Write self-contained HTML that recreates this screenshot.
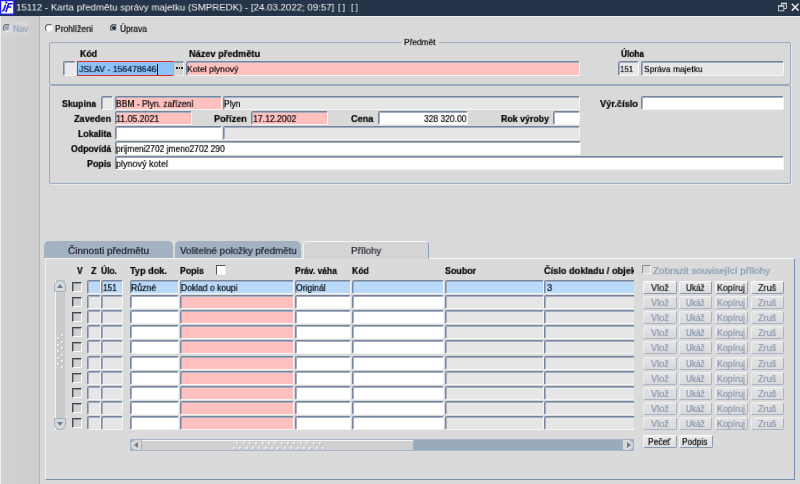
<!DOCTYPE html><html><head><meta charset="utf-8"><style>
*{margin:0;padding:0;box-sizing:border-box}
html,body{width:800px;height:484px;overflow:hidden;background:#d9d9d9;font-family:"Liberation Sans",sans-serif;font-size:10px;color:#000;position:relative}
.t{position:absolute;white-space:nowrap;line-height:12px;transform-origin:0 0;will-change:transform;-webkit-text-stroke:0.2px currentColor}
.f{position:absolute;border-top:1px solid #76849d;border-left:1px solid #7a88a0;border-right:1px solid #f5f5f5;border-bottom:1px solid #f5f5f5;box-shadow:inset 1px 1px 0 #a3aec0;border-radius:2px}
.btn{position:absolute;height:13px;border:1px solid #8a9ab0;border-top-color:#fbfbfb;border-left-color:#f6f6f6;background:linear-gradient(#ebebeb,#dcdcdc);border-radius:2px}
.dis{background:linear-gradient(#e4e4e4,#dadada);border-color:#f0f0f0 #a9b5c6 #a9b5c6 #ededed}
.cb{position:absolute;width:10px;height:10px;border-top:1px solid #3f4753;border-left:1px solid #444c58;border-right:1px solid #fafafa;border-bottom:1px solid #fafafa;background:#d0d0d0;box-shadow:inset 1px 1px 0 #8e96a0}
</style></head><body>
<div style="position:absolute;left:0px;top:0px;width:800px;height:16px;background:#26344a"></div>
<svg style="position:absolute;left:0;top:0" width="15" height="15" viewBox="0 0 15 15"><rect x="0.6" y="0.6" width="13.3" height="13.6" fill="#fbfbf0" stroke="#1a1af2" stroke-width="1.3"/><circle cx="6.3" cy="2.6" r="1.1" fill="#1010e8"/><path d="M5.4 5.2 L3.6 10.4 L2.6 10.9" fill="none" stroke="#1010e8" stroke-width="1.6" stroke-linecap="round"/><path d="M8.6 3.8 L12.2 3.8 M7.4 7 L10.6 7 M8.6 3.8 L6 11.4" fill="none" stroke="#1010e8" stroke-width="1.6" stroke-linecap="round"/></svg>
<div class="t" style="left:16.03px;top:2.73px;font-size:10px;color:#f4f4f4;transform:scale(0.9679,0.83);-webkit-text-stroke:0">15112 - Karta předmětu správy majetku (SMPREDK) - [24.03.2022; 09:57]</div>
<div class="t" style="left:338.00px;top:2.73px;font-size:10px;color:#f4f4f4;transform:scale(0.8375,0.83);-webkit-text-stroke:0">[ ]</div>
<div class="t" style="left:351.30px;top:2.73px;font-size:10px;color:#f4f4f4;transform:scale(0.8125,0.83);-webkit-text-stroke:0">[ ]</div>
<svg style="position:absolute;left:770px;top:0px" width="30" height="16" viewBox="0 0 30 16"><path d="M11.5 8.5 V3.5 H16.5 V8.5 H14" fill="none" stroke="#c4c6ca" stroke-width="1"/><path d="M11 3.5 H17" stroke="#d0d2d6" stroke-width="1.6"/><rect x="8.5" y="5.8" width="5.3" height="5" fill="#26354a" stroke="#c4c6ca" stroke-width="1"/><path d="M8 6.2 H14.3" stroke="#c8cacd" stroke-width="1.2"/><path d="M21.8 3.8 L28.6 10.6 M28.6 3.8 L21.8 10.6" stroke="#e6e6e6" stroke-width="1.5"/></svg>
<div style="position:absolute;left:0px;top:16px;width:800px;height:1px;background:#f0f0f0"></div>
<div style="position:absolute;left:0px;top:16px;width:39px;height:468px;background:linear-gradient(90deg,#d2d2d2,#cdcdcd);border-left:1px solid #efefef"></div>
<div style="position:absolute;left:39px;top:16px;width:1px;height:468px;background:#a9b8cb"></div>
<div style="position:absolute;left:2px;top:21px;width:27px;height:14px;background:#d6d6d6"></div>
<div style="position:absolute;left:3px;top:24px;width:8px;height:8px;border-radius:50%;background:#8fa0b6;border:1px solid #666;border-right-color:#eee;border-bottom-color:#eee;box-shadow:inset 0 0 0 1px #c8d0da"></div>
<div class="t" style="left:13.12px;top:24.30px;font-size:10px;color:#93a4bc;transform:scale(0.8824,0.9);">Nav</div>
<div style="position:absolute;left:45px;top:24px;width:8px;height:8px;border-radius:50%;background:#fff;border:1px solid #555;border-right-color:#e8e8e8;border-bottom-color:#e8e8e8"></div>
<div class="t" style="left:55.35px;top:23.70px;font-size:10px;color:#000;transform:scale(0.8512,0.9);">Prohlíženi</div>
<div style="position:absolute;left:110px;top:24px;width:8px;height:8px;border-radius:50%;background:#263040;border:1px solid #555;border-right-color:#e8e8e8;border-bottom-color:#e8e8e8;box-shadow:inset 0 0 0 1px #b8bec8"></div>
<div class="t" style="left:120.20px;top:23.70px;font-size:10px;color:#000;transform:scale(0.8303,0.9);">Úprava</div>
<div style="position:absolute;left:49px;top:42px;width:742px;height:43px;border:1px solid #9dacc0;border-radius:2px;box-shadow:1px 1px 0 #e8e8e8"></div>
<div style="position:absolute;left:401px;top:40px;width:38px;height:5px;background:#d9d9d9"></div>
<div class="t" style="left:404.17px;top:38.40px;font-size:10px;color:#000;transform:scale(0.8324,0.8);">Předmět</div>
<div class="t" style="left:80.40px;top:48.90px;font-size:10px;font-weight:bold;color:#000;transform:scale(0.8789,0.9);">Kód</div>
<div class="t" style="left:188.75px;top:48.90px;font-size:10px;font-weight:bold;color:#000;transform:scale(0.9201,0.9);">Název předmětu</div>
<div class="t" style="left:621.25px;top:48.90px;font-size:10px;font-weight:bold;color:#000;transform:scale(0.8268,0.9);">Úloha</div>
<div class="f" style="left:63px;top:61px;width:13px;height:15px;background:#e9e9e9;"></div>
<div style="position:absolute;left:77px;top:61px;width:96px;height:15px;background:#8cc3f8;border:1px solid #e42a2a;border-right:none"></div>
<div style="position:absolute;left:157px;top:64px;width:1px;height:11px;background:#000"></div>
<div class="t" style="left:79.20px;top:65.20px;font-size:10px;color:#08102a;transform:scale(0.8708,0.8);">JSLAV - 156478646</div>
<div style="position:absolute;left:173px;top:61px;width:11px;height:15px;background:#d4d4d4;border-top:2px solid #8a9bb2;border-left:1px solid #aab;border-right:1px solid #f2f2f2;border-bottom:1px solid #f2f2f2"></div>
<div style="position:absolute;left:176px;top:67px;width:1.5px;height:2px;background:#222"></div><div style="position:absolute;left:178.5px;top:67px;width:1.5px;height:2px;background:#222"></div><div style="position:absolute;left:181px;top:67px;width:1.5px;height:2px;background:#222"></div>
<div class="f" style="left:186px;top:61px;width:394px;height:15px;background:#ffc0c0;"></div>
<div class="t" style="left:186.89px;top:65.20px;font-size:10px;color:#000;transform:scale(0.8644,0.8);">Kotel plynový</div>
<div class="f" style="left:618px;top:61px;width:21px;height:15px;background:#e9e9e9;"></div>
<div class="t" style="left:620.46px;top:65.20px;font-size:10px;color:#000;transform:scale(0.7900,0.8);">151</div>
<div class="f" style="left:641px;top:61px;width:143px;height:15px;background:#e6e6e6;"></div>
<div class="t" style="left:643.75px;top:65.20px;font-size:10px;color:#000;transform:scale(0.8428,0.8);">Správa majetku</div>
<div style="position:absolute;left:49px;top:85px;width:742px;height:99px;border:1px solid #9dacc0;border-radius:2px;box-shadow:1px 1px 0 #e8e8e8"></div>
<div class="t" style="left:62.00px;top:98.90px;font-size:10px;font-weight:bold;color:#000;transform:scale(0.8782,0.9);">Skupina</div>
<div class="f" style="left:101px;top:96px;width:12px;height:14px;background:#e9e9e9;"></div>
<div class="f" style="left:115px;top:96px;width:107px;height:14px;background:#ffc0c0;"></div>
<div class="t" style="left:116.15px;top:98.90px;font-size:10px;color:#000;transform:scale(0.8511,0.9);">BBM - Plyn. zařízení</div>
<div class="f" style="left:223px;top:96px;width:357px;height:14px;background:#e6e6e6;"></div>
<div class="t" style="left:224.17px;top:98.90px;font-size:10px;color:#000;transform:scale(0.8333,0.9);">Plyn</div>
<div class="t" style="left:599.60px;top:98.90px;font-size:10px;font-weight:bold;color:#000;transform:scale(0.9220,0.9);">Výr.číslo</div>
<div class="f" style="left:641px;top:96px;width:143px;height:14px;background:#fff;"></div>
<div class="t" style="left:74.00px;top:113.90px;font-size:10px;font-weight:bold;color:#000;transform:scale(0.9125,0.9);">Zaveden</div>
<div class="f" style="left:115px;top:111px;width:77px;height:14px;background:#ffc0c0;"></div>
<div class="t" style="left:116.12px;top:113.90px;font-size:10px;color:#000;transform:scale(0.8750,0.9);">11.05.2021</div>
<div class="t" style="left:214.40px;top:113.90px;font-size:10px;font-weight:bold;color:#000;transform:scale(0.9056,0.9);">Pořízen</div>
<div class="f" style="left:251px;top:111px;width:77px;height:14px;background:#ffc0c0;"></div>
<div class="t" style="left:252.73px;top:113.90px;font-size:10px;color:#000;transform:scale(0.8653,0.9);">17.12.2002</div>
<div class="t" style="left:351.10px;top:113.90px;font-size:10px;font-weight:bold;color:#000;transform:scale(0.9100,0.9);">Cena</div>
<div class="f" style="left:378px;top:111px;width:90px;height:14px;background:#fff;"></div>
<div class="t" style="left:423.60px;top:113.90px;font-size:10px;color:#000;transform:scale(0.8480,0.9);">328 320.00</div>
<div class="t" style="left:501.00px;top:113.90px;font-size:10px;font-weight:bold;color:#000;transform:scale(0.8800,0.9);">Rok výroby</div>
<div class="f" style="left:553px;top:111px;width:27px;height:14px;background:#fff;"></div>
<div class="t" style="left:77.50px;top:128.90px;font-size:10px;font-weight:bold;color:#000;transform:scale(0.8789,0.9);">Lokalita</div>
<div class="f" style="left:115px;top:126px;width:107px;height:14px;background:#fff;"></div>
<div class="f" style="left:223px;top:126px;width:357px;height:14px;background:#e6e6e6;"></div>
<div class="t" style="left:70.80px;top:143.90px;font-size:10px;font-weight:bold;color:#000;transform:scale(0.8717,0.9);">Odpovídá</div>
<div class="f" style="left:115px;top:141px;width:466px;height:14px;background:#fff;"></div>
<div class="t" style="left:116.30px;top:143.90px;font-size:10px;color:#000;transform:scale(0.8426,0.9);">prijmeni2702 jmeno2702 290</div>
<div class="t" style="left:87.00px;top:158.90px;font-size:10px;font-weight:bold;color:#000;transform:scale(0.8852,0.9);">Popis</div>
<div class="f" style="left:115px;top:156px;width:669px;height:14px;background:#fff;"></div>
<div class="t" style="left:116.30px;top:158.90px;font-size:10px;color:#000;transform:scale(0.9000,0.9);">plynový kotel</div>
<div style="position:absolute;left:44px;top:241px;width:129px;height:17px;background:#a3b1c3;border-radius:5px 5px 0 0"></div>
<div class="t" style="left:68.20px;top:245.90px;font-size:10px;color:#1c1c2a;transform:scale(1.0000,0.9);">Činnosti předmětu</div>
<div style="position:absolute;left:175px;top:241px;width:126px;height:17px;background:#a3b1c3;border-radius:5px 5px 0 0"></div>
<div class="t" style="left:180.20px;top:245.90px;font-size:10px;color:#1c1c2a;transform:scale(0.9765,0.9);">Volitelné položky předmětu</div>
<div style="position:absolute;left:45px;top:258px;width:750px;height:222px;border-top:1px solid #f6f6f6;border-left:1px solid #f0f0f0;border-right:1px solid #7a8fab;border-bottom:1px solid #7a8fab;background:#dadada"></div>
<div style="position:absolute;left:303px;top:241px;width:126px;height:18px;background:#d4d4d4;border-radius:4px 4px 0 0;border-top:1px solid #f6f6f6;border-left:1px solid #f2f2f2;border-right:1px solid #8fa2bb"></div>
<div class="t" style="left:350.72px;top:245.90px;font-size:10px;color:#1c1c2a;transform:scale(0.9767,0.9);">Přílohy</div>
<div class="t" style="left:77.00px;top:266.40px;font-size:10px;font-weight:bold;color:#000;transform:scale(0.8571,0.9);">V</div>
<div class="t" style="left:90.60px;top:266.40px;font-size:10px;font-weight:bold;color:#000;transform:scale(0.9000,0.9);">Z</div>
<div class="t" style="left:101.00px;top:266.40px;font-size:10px;font-weight:bold;color:#000;transform:scale(0.8421,0.9);">Úlo.</div>
<div class="t" style="left:130.40px;top:266.40px;font-size:10px;font-weight:bold;color:#000;transform:scale(0.9150,0.9);">Typ dok.</div>
<div class="t" style="left:180.00px;top:266.40px;font-size:10px;font-weight:bold;color:#000;transform:scale(0.8741,0.9);">Popis</div>
<div class="t" style="left:295.00px;top:266.40px;font-size:10px;font-weight:bold;color:#000;transform:scale(0.8500,0.9);">Práv. váha</div>
<div class="t" style="left:351.75px;top:266.40px;font-size:10px;font-weight:bold;color:#000;transform:scale(0.8684,0.9);">Kód</div>
<div class="t" style="left:445.10px;top:266.40px;font-size:10px;font-weight:bold;color:#000;transform:scale(0.8886,0.9);">Soubor</div>
<div style="position:absolute;left:544px;top:262px;width:90px;height:16px;overflow:hidden">
<div class="t" style="left:0.10px;top:4.40px;font-size:10px;font-weight:bold;color:#000;transform:scale(0.9190,0.9);">Číslo dokladu / objek</div>
</div>
<div style="position:absolute;left:216px;top:265px;width:10px;height:10px;background:#fff;border-top:1px solid #555;border-left:1px solid #555;border-right:1px solid #eee;border-bottom:1px solid #eee"></div>
<div style="position:absolute;left:642px;top:265px;width:9px;height:9px;background:#d8d8d8;border-top:1px solid #8a8a8a;border-left:1px solid #8a8a8a;border-right:1px solid #f4f4f4;border-bottom:1px solid #f4f4f4"></div>
<div class="t" style="left:653.00px;top:266.40px;font-size:10px;color:#8797b3;transform:scale(0.9882,0.9);">Zobrazit související přílohy</div>
<div class="cb" style="left:72px;top:282px"></div>
<div class="f" style="left:87px;top:280px;width:14px;height:14px;background:#b9dafa;"></div>
<div class="f" style="left:101px;top:280px;width:22px;height:14px;background:#b9dafa;"></div>
<div class="f" style="left:130px;top:280px;width:49px;height:14px;background:#b9dafa;"></div>
<div class="f" style="left:180px;top:280px;width:114px;height:14px;background:#b9dafa;"></div>
<div class="f" style="left:295px;top:280px;width:56px;height:14px;background:#b9dafa;"></div>
<div class="f" style="left:352px;top:280px;width:92px;height:14px;background:#b9dafa;"></div>
<div class="f" style="left:445px;top:280px;width:99px;height:14px;background:#b9dafa;"></div>
<div class="f" style="left:544px;top:280px;width:90px;height:14px;background:#b9dafa;border-right:none;border-radius:2px 0 0 2px"></div>
<div class="btn" style="left:643px;top:281px;width:34px"></div>
<div class="btn" style="left:679px;top:281px;width:33px"></div>
<div class="btn" style="left:715px;top:281px;width:33px"></div>
<div class="btn" style="left:751px;top:281px;width:33px"></div>
<div class="t" style="left:650.60px;top:282.50px;font-size:10px;color:#101010;transform:scale(0.9158,0.9);">Vlož</div>
<div class="t" style="left:685.60px;top:282.50px;font-size:10px;color:#101010;transform:scale(0.8174,0.9);">Ukáž</div>
<div class="t" style="left:717.12px;top:282.50px;font-size:10px;color:#101010;transform:scale(0.8800,0.9);">Kopíruj</div>
<div class="t" style="left:757.80px;top:282.50px;font-size:10px;color:#101010;transform:scale(0.9100,0.9);">Zruš</div>
<div class="cb" style="left:72px;top:297px"></div>
<div class="f" style="left:87px;top:295px;width:14px;height:14px;background:#e6e6e6;"></div>
<div class="f" style="left:101px;top:295px;width:22px;height:14px;background:#e6e6e6;"></div>
<div class="f" style="left:130px;top:295px;width:49px;height:14px;background:#fff;"></div>
<div class="f" style="left:180px;top:295px;width:114px;height:14px;background:#ffc0c0;"></div>
<div class="f" style="left:295px;top:295px;width:56px;height:14px;background:#fff;"></div>
<div class="f" style="left:352px;top:295px;width:92px;height:14px;background:#fff;"></div>
<div class="f" style="left:445px;top:295px;width:99px;height:14px;background:#e6e6e6;"></div>
<div class="f" style="left:544px;top:295px;width:90px;height:14px;background:#e6e6e6;border-right:none;border-radius:2px 0 0 2px"></div>
<div class="btn dis" style="left:643px;top:296px;width:34px"></div>
<div class="btn dis" style="left:679px;top:296px;width:33px"></div>
<div class="btn dis" style="left:715px;top:296px;width:33px"></div>
<div class="btn dis" style="left:751px;top:296px;width:33px"></div>
<div class="t" style="left:650.60px;top:297.50px;font-size:10px;color:#8595b0;transform:scale(0.9158,0.9);">Vlož</div>
<div class="t" style="left:685.60px;top:297.50px;font-size:10px;color:#8595b0;transform:scale(0.8174,0.9);">Ukáž</div>
<div class="t" style="left:717.12px;top:297.50px;font-size:10px;color:#8595b0;transform:scale(0.8800,0.9);">Kopíruj</div>
<div class="t" style="left:757.80px;top:297.50px;font-size:10px;color:#8595b0;transform:scale(0.9100,0.9);">Zruš</div>
<div class="cb" style="left:72px;top:312px"></div>
<div class="f" style="left:87px;top:310px;width:14px;height:14px;background:#e6e6e6;"></div>
<div class="f" style="left:101px;top:310px;width:22px;height:14px;background:#e6e6e6;"></div>
<div class="f" style="left:130px;top:310px;width:49px;height:14px;background:#fff;"></div>
<div class="f" style="left:180px;top:310px;width:114px;height:14px;background:#ffc0c0;"></div>
<div class="f" style="left:295px;top:310px;width:56px;height:14px;background:#fff;"></div>
<div class="f" style="left:352px;top:310px;width:92px;height:14px;background:#fff;"></div>
<div class="f" style="left:445px;top:310px;width:99px;height:14px;background:#e6e6e6;"></div>
<div class="f" style="left:544px;top:310px;width:90px;height:14px;background:#e6e6e6;border-right:none;border-radius:2px 0 0 2px"></div>
<div class="btn dis" style="left:643px;top:311px;width:34px"></div>
<div class="btn dis" style="left:679px;top:311px;width:33px"></div>
<div class="btn dis" style="left:715px;top:311px;width:33px"></div>
<div class="btn dis" style="left:751px;top:311px;width:33px"></div>
<div class="t" style="left:650.60px;top:312.50px;font-size:10px;color:#8595b0;transform:scale(0.9158,0.9);">Vlož</div>
<div class="t" style="left:685.60px;top:312.50px;font-size:10px;color:#8595b0;transform:scale(0.8174,0.9);">Ukáž</div>
<div class="t" style="left:717.12px;top:312.50px;font-size:10px;color:#8595b0;transform:scale(0.8800,0.9);">Kopíruj</div>
<div class="t" style="left:757.80px;top:312.50px;font-size:10px;color:#8595b0;transform:scale(0.9100,0.9);">Zruš</div>
<div class="cb" style="left:72px;top:327px"></div>
<div class="f" style="left:87px;top:325px;width:14px;height:14px;background:#e6e6e6;"></div>
<div class="f" style="left:101px;top:325px;width:22px;height:14px;background:#e6e6e6;"></div>
<div class="f" style="left:130px;top:325px;width:49px;height:14px;background:#fff;"></div>
<div class="f" style="left:180px;top:325px;width:114px;height:14px;background:#ffc0c0;"></div>
<div class="f" style="left:295px;top:325px;width:56px;height:14px;background:#fff;"></div>
<div class="f" style="left:352px;top:325px;width:92px;height:14px;background:#fff;"></div>
<div class="f" style="left:445px;top:325px;width:99px;height:14px;background:#e6e6e6;"></div>
<div class="f" style="left:544px;top:325px;width:90px;height:14px;background:#e6e6e6;border-right:none;border-radius:2px 0 0 2px"></div>
<div class="btn dis" style="left:643px;top:326px;width:34px"></div>
<div class="btn dis" style="left:679px;top:326px;width:33px"></div>
<div class="btn dis" style="left:715px;top:326px;width:33px"></div>
<div class="btn dis" style="left:751px;top:326px;width:33px"></div>
<div class="t" style="left:650.60px;top:327.50px;font-size:10px;color:#8595b0;transform:scale(0.9158,0.9);">Vlož</div>
<div class="t" style="left:685.60px;top:327.50px;font-size:10px;color:#8595b0;transform:scale(0.8174,0.9);">Ukáž</div>
<div class="t" style="left:717.12px;top:327.50px;font-size:10px;color:#8595b0;transform:scale(0.8800,0.9);">Kopíruj</div>
<div class="t" style="left:757.80px;top:327.50px;font-size:10px;color:#8595b0;transform:scale(0.9100,0.9);">Zruš</div>
<div class="cb" style="left:72px;top:342px"></div>
<div class="f" style="left:87px;top:340px;width:14px;height:14px;background:#e6e6e6;"></div>
<div class="f" style="left:101px;top:340px;width:22px;height:14px;background:#e6e6e6;"></div>
<div class="f" style="left:130px;top:340px;width:49px;height:14px;background:#fff;"></div>
<div class="f" style="left:180px;top:340px;width:114px;height:14px;background:#ffc0c0;"></div>
<div class="f" style="left:295px;top:340px;width:56px;height:14px;background:#fff;"></div>
<div class="f" style="left:352px;top:340px;width:92px;height:14px;background:#fff;"></div>
<div class="f" style="left:445px;top:340px;width:99px;height:14px;background:#e6e6e6;"></div>
<div class="f" style="left:544px;top:340px;width:90px;height:14px;background:#e6e6e6;border-right:none;border-radius:2px 0 0 2px"></div>
<div class="btn dis" style="left:643px;top:341px;width:34px"></div>
<div class="btn dis" style="left:679px;top:341px;width:33px"></div>
<div class="btn dis" style="left:715px;top:341px;width:33px"></div>
<div class="btn dis" style="left:751px;top:341px;width:33px"></div>
<div class="t" style="left:650.60px;top:342.50px;font-size:10px;color:#8595b0;transform:scale(0.9158,0.9);">Vlož</div>
<div class="t" style="left:685.60px;top:342.50px;font-size:10px;color:#8595b0;transform:scale(0.8174,0.9);">Ukáž</div>
<div class="t" style="left:717.12px;top:342.50px;font-size:10px;color:#8595b0;transform:scale(0.8800,0.9);">Kopíruj</div>
<div class="t" style="left:757.80px;top:342.50px;font-size:10px;color:#8595b0;transform:scale(0.9100,0.9);">Zruš</div>
<div class="cb" style="left:72px;top:358px"></div>
<div class="f" style="left:87px;top:356px;width:14px;height:14px;background:#e6e6e6;"></div>
<div class="f" style="left:101px;top:356px;width:22px;height:14px;background:#e6e6e6;"></div>
<div class="f" style="left:130px;top:356px;width:49px;height:14px;background:#fff;"></div>
<div class="f" style="left:180px;top:356px;width:114px;height:14px;background:#ffc0c0;"></div>
<div class="f" style="left:295px;top:356px;width:56px;height:14px;background:#fff;"></div>
<div class="f" style="left:352px;top:356px;width:92px;height:14px;background:#fff;"></div>
<div class="f" style="left:445px;top:356px;width:99px;height:14px;background:#e6e6e6;"></div>
<div class="f" style="left:544px;top:356px;width:90px;height:14px;background:#e6e6e6;border-right:none;border-radius:2px 0 0 2px"></div>
<div class="btn dis" style="left:643px;top:357px;width:34px"></div>
<div class="btn dis" style="left:679px;top:357px;width:33px"></div>
<div class="btn dis" style="left:715px;top:357px;width:33px"></div>
<div class="btn dis" style="left:751px;top:357px;width:33px"></div>
<div class="t" style="left:650.60px;top:358.50px;font-size:10px;color:#8595b0;transform:scale(0.9158,0.9);">Vlož</div>
<div class="t" style="left:685.60px;top:358.50px;font-size:10px;color:#8595b0;transform:scale(0.8174,0.9);">Ukáž</div>
<div class="t" style="left:717.12px;top:358.50px;font-size:10px;color:#8595b0;transform:scale(0.8800,0.9);">Kopíruj</div>
<div class="t" style="left:757.80px;top:358.50px;font-size:10px;color:#8595b0;transform:scale(0.9100,0.9);">Zruš</div>
<div class="cb" style="left:72px;top:373px"></div>
<div class="f" style="left:87px;top:371px;width:14px;height:14px;background:#e6e6e6;"></div>
<div class="f" style="left:101px;top:371px;width:22px;height:14px;background:#e6e6e6;"></div>
<div class="f" style="left:130px;top:371px;width:49px;height:14px;background:#fff;"></div>
<div class="f" style="left:180px;top:371px;width:114px;height:14px;background:#ffc0c0;"></div>
<div class="f" style="left:295px;top:371px;width:56px;height:14px;background:#fff;"></div>
<div class="f" style="left:352px;top:371px;width:92px;height:14px;background:#fff;"></div>
<div class="f" style="left:445px;top:371px;width:99px;height:14px;background:#e6e6e6;"></div>
<div class="f" style="left:544px;top:371px;width:90px;height:14px;background:#e6e6e6;border-right:none;border-radius:2px 0 0 2px"></div>
<div class="btn dis" style="left:643px;top:372px;width:34px"></div>
<div class="btn dis" style="left:679px;top:372px;width:33px"></div>
<div class="btn dis" style="left:715px;top:372px;width:33px"></div>
<div class="btn dis" style="left:751px;top:372px;width:33px"></div>
<div class="t" style="left:650.60px;top:373.50px;font-size:10px;color:#8595b0;transform:scale(0.9158,0.9);">Vlož</div>
<div class="t" style="left:685.60px;top:373.50px;font-size:10px;color:#8595b0;transform:scale(0.8174,0.9);">Ukáž</div>
<div class="t" style="left:717.12px;top:373.50px;font-size:10px;color:#8595b0;transform:scale(0.8800,0.9);">Kopíruj</div>
<div class="t" style="left:757.80px;top:373.50px;font-size:10px;color:#8595b0;transform:scale(0.9100,0.9);">Zruš</div>
<div class="cb" style="left:72px;top:388px"></div>
<div class="f" style="left:87px;top:386px;width:14px;height:14px;background:#e6e6e6;"></div>
<div class="f" style="left:101px;top:386px;width:22px;height:14px;background:#e6e6e6;"></div>
<div class="f" style="left:130px;top:386px;width:49px;height:14px;background:#fff;"></div>
<div class="f" style="left:180px;top:386px;width:114px;height:14px;background:#ffc0c0;"></div>
<div class="f" style="left:295px;top:386px;width:56px;height:14px;background:#fff;"></div>
<div class="f" style="left:352px;top:386px;width:92px;height:14px;background:#fff;"></div>
<div class="f" style="left:445px;top:386px;width:99px;height:14px;background:#e6e6e6;"></div>
<div class="f" style="left:544px;top:386px;width:90px;height:14px;background:#e6e6e6;border-right:none;border-radius:2px 0 0 2px"></div>
<div class="btn dis" style="left:643px;top:387px;width:34px"></div>
<div class="btn dis" style="left:679px;top:387px;width:33px"></div>
<div class="btn dis" style="left:715px;top:387px;width:33px"></div>
<div class="btn dis" style="left:751px;top:387px;width:33px"></div>
<div class="t" style="left:650.60px;top:388.50px;font-size:10px;color:#8595b0;transform:scale(0.9158,0.9);">Vlož</div>
<div class="t" style="left:685.60px;top:388.50px;font-size:10px;color:#8595b0;transform:scale(0.8174,0.9);">Ukáž</div>
<div class="t" style="left:717.12px;top:388.50px;font-size:10px;color:#8595b0;transform:scale(0.8800,0.9);">Kopíruj</div>
<div class="t" style="left:757.80px;top:388.50px;font-size:10px;color:#8595b0;transform:scale(0.9100,0.9);">Zruš</div>
<div class="cb" style="left:72px;top:403px"></div>
<div class="f" style="left:87px;top:401px;width:14px;height:14px;background:#e6e6e6;"></div>
<div class="f" style="left:101px;top:401px;width:22px;height:14px;background:#e6e6e6;"></div>
<div class="f" style="left:130px;top:401px;width:49px;height:14px;background:#fff;"></div>
<div class="f" style="left:180px;top:401px;width:114px;height:14px;background:#ffc0c0;"></div>
<div class="f" style="left:295px;top:401px;width:56px;height:14px;background:#fff;"></div>
<div class="f" style="left:352px;top:401px;width:92px;height:14px;background:#fff;"></div>
<div class="f" style="left:445px;top:401px;width:99px;height:14px;background:#e6e6e6;"></div>
<div class="f" style="left:544px;top:401px;width:90px;height:14px;background:#e6e6e6;border-right:none;border-radius:2px 0 0 2px"></div>
<div class="btn dis" style="left:643px;top:402px;width:34px"></div>
<div class="btn dis" style="left:679px;top:402px;width:33px"></div>
<div class="btn dis" style="left:715px;top:402px;width:33px"></div>
<div class="btn dis" style="left:751px;top:402px;width:33px"></div>
<div class="t" style="left:650.60px;top:403.50px;font-size:10px;color:#8595b0;transform:scale(0.9158,0.9);">Vlož</div>
<div class="t" style="left:685.60px;top:403.50px;font-size:10px;color:#8595b0;transform:scale(0.8174,0.9);">Ukáž</div>
<div class="t" style="left:717.12px;top:403.50px;font-size:10px;color:#8595b0;transform:scale(0.8800,0.9);">Kopíruj</div>
<div class="t" style="left:757.80px;top:403.50px;font-size:10px;color:#8595b0;transform:scale(0.9100,0.9);">Zruš</div>
<div class="cb" style="left:72px;top:418px"></div>
<div class="f" style="left:87px;top:416px;width:14px;height:14px;background:#e6e6e6;"></div>
<div class="f" style="left:101px;top:416px;width:22px;height:14px;background:#e6e6e6;"></div>
<div class="f" style="left:130px;top:416px;width:49px;height:14px;background:#fff;"></div>
<div class="f" style="left:180px;top:416px;width:114px;height:14px;background:#ffc0c0;"></div>
<div class="f" style="left:295px;top:416px;width:56px;height:14px;background:#fff;"></div>
<div class="f" style="left:352px;top:416px;width:92px;height:14px;background:#fff;"></div>
<div class="f" style="left:445px;top:416px;width:99px;height:14px;background:#e6e6e6;"></div>
<div class="f" style="left:544px;top:416px;width:90px;height:14px;background:#e6e6e6;border-right:none;border-radius:2px 0 0 2px"></div>
<div class="btn dis" style="left:643px;top:417px;width:34px"></div>
<div class="btn dis" style="left:679px;top:417px;width:33px"></div>
<div class="btn dis" style="left:715px;top:417px;width:33px"></div>
<div class="btn dis" style="left:751px;top:417px;width:33px"></div>
<div class="t" style="left:650.60px;top:418.50px;font-size:10px;color:#8595b0;transform:scale(0.9158,0.9);">Vlož</div>
<div class="t" style="left:685.60px;top:418.50px;font-size:10px;color:#8595b0;transform:scale(0.8174,0.9);">Ukáž</div>
<div class="t" style="left:717.12px;top:418.50px;font-size:10px;color:#8595b0;transform:scale(0.8800,0.9);">Kopíruj</div>
<div class="t" style="left:757.80px;top:418.50px;font-size:10px;color:#8595b0;transform:scale(0.9100,0.9);">Zruš</div>
<div class="t" style="left:103.17px;top:282.90px;font-size:10px;color:#000;transform:scale(0.8267,0.9);">151</div>
<div class="t" style="left:131.13px;top:282.90px;font-size:10px;color:#000;transform:scale(0.8714,0.9);">Různé</div>
<div class="t" style="left:181.15px;top:282.90px;font-size:10px;color:#000;transform:scale(0.8538,0.9);">Doklad o koupi</div>
<div class="t" style="left:296.25px;top:282.90px;font-size:10px;color:#000;transform:scale(0.8603,0.9);">Originál</div>
<div class="t" style="left:546.90px;top:282.90px;font-size:10px;color:#000;transform:scale(0.9200,0.9);">3</div>
<div style="position:absolute;left:55px;top:280px;width:10px;height:150px;background:#cbcbcb;border-left:1px solid #f4f4f4"></div>
<div style="position:absolute;left:54px;top:280px;width:12px;height:12px;border-radius:6px 6px 1px 1px;background:#d8d8d8;border:1px solid #9fb0c5"><div style="position:absolute;left:2px;top:3px;width:0;height:0;border-left:3px solid transparent;border-right:3px solid transparent;border-bottom:4px solid #6a7e9a"></div></div>
<div style="position:absolute;left:54px;top:418px;width:12px;height:12px;border-radius:1px 1px 6px 6px;background:#d8d8d8;border:1px solid #9fb0c5"><div style="position:absolute;left:2px;top:3px;width:0;height:0;border-left:3px solid transparent;border-right:3px solid transparent;border-top:4px solid #6a7e9a"></div></div>
<div style="position:absolute;left:61.4px;top:334.3px;width:2px;height:2px;border-radius:1px;background:#fcfcfc;box-shadow:0.6px 0.6px 0.6px #98a6b8"></div>
<div style="position:absolute;left:61.4px;top:340.7px;width:2px;height:2px;border-radius:1px;background:#fcfcfc;box-shadow:0.6px 0.6px 0.6px #98a6b8"></div>
<div style="position:absolute;left:61.4px;top:347.1px;width:2px;height:2px;border-radius:1px;background:#fcfcfc;box-shadow:0.6px 0.6px 0.6px #98a6b8"></div>
<div style="position:absolute;left:61.4px;top:353.6px;width:2px;height:2px;border-radius:1px;background:#fcfcfc;box-shadow:0.6px 0.6px 0.6px #98a6b8"></div>
<div style="position:absolute;left:61.4px;top:360.0px;width:2px;height:2px;border-radius:1px;background:#fcfcfc;box-shadow:0.6px 0.6px 0.6px #98a6b8"></div>
<div style="position:absolute;left:61.4px;top:366.4px;width:2px;height:2px;border-radius:1px;background:#fcfcfc;box-shadow:0.6px 0.6px 0.6px #98a6b8"></div>
<div style="position:absolute;left:57.3px;top:337.4px;width:2px;height:2px;border-radius:1px;background:#fcfcfc;box-shadow:0.6px 0.6px 0.6px #98a6b8"></div>
<div style="position:absolute;left:57.3px;top:343.8px;width:2px;height:2px;border-radius:1px;background:#fcfcfc;box-shadow:0.6px 0.6px 0.6px #98a6b8"></div>
<div style="position:absolute;left:57.3px;top:350.2px;width:2px;height:2px;border-radius:1px;background:#fcfcfc;box-shadow:0.6px 0.6px 0.6px #98a6b8"></div>
<div style="position:absolute;left:57.3px;top:356.7px;width:2px;height:2px;border-radius:1px;background:#fcfcfc;box-shadow:0.6px 0.6px 0.6px #98a6b8"></div>
<div style="position:absolute;left:57.3px;top:363.1px;width:2px;height:2px;border-radius:1px;background:#fcfcfc;box-shadow:0.6px 0.6px 0.6px #98a6b8"></div>
<div style="position:absolute;left:130px;top:439px;width:504px;height:12px;background:#9aaabd;border:1px solid #aab7c8"></div>
<div style="position:absolute;left:142px;top:440px;width:272px;height:10px;background:#d0d0d0;border-top:1px solid #f6f6f6;border-right:1px solid #a0aec0"></div>
<div style="position:absolute;left:130px;top:439px;width:12px;height:12px;border-radius:6px 1px 1px 6px;background:#d8d8d8;border:1px solid #9fb0c5"><div style="position:absolute;left:3px;top:2px;width:0;height:0;border-top:3px solid transparent;border-bottom:3px solid transparent;border-right:4px solid #6a7e9a"></div></div>
<div style="position:absolute;left:622px;top:439px;width:12px;height:12px;border-radius:1px 6px 6px 1px;background:#d8d8d8;border:1px solid #9fb0c5"><div style="position:absolute;left:4px;top:2px;width:0;height:0;border-top:3px solid transparent;border-bottom:3px solid transparent;border-left:4px solid #6a7e9a"></div></div>
<div style="position:absolute;left:236.1px;top:442.2px;width:2px;height:2px;border-radius:1px;background:#fcfcfc;box-shadow:0.6px 0.6px 0.6px #98a6b8"></div>
<div style="position:absolute;left:242.5px;top:442.2px;width:2px;height:2px;border-radius:1px;background:#fcfcfc;box-shadow:0.6px 0.6px 0.6px #98a6b8"></div>
<div style="position:absolute;left:248.8px;top:442.2px;width:2px;height:2px;border-radius:1px;background:#fcfcfc;box-shadow:0.6px 0.6px 0.6px #98a6b8"></div>
<div style="position:absolute;left:255.2px;top:442.2px;width:2px;height:2px;border-radius:1px;background:#fcfcfc;box-shadow:0.6px 0.6px 0.6px #98a6b8"></div>
<div style="position:absolute;left:261.6px;top:442.2px;width:2px;height:2px;border-radius:1px;background:#fcfcfc;box-shadow:0.6px 0.6px 0.6px #98a6b8"></div>
<div style="position:absolute;left:267.9px;top:442.2px;width:2px;height:2px;border-radius:1px;background:#fcfcfc;box-shadow:0.6px 0.6px 0.6px #98a6b8"></div>
<div style="position:absolute;left:274.3px;top:442.2px;width:2px;height:2px;border-radius:1px;background:#fcfcfc;box-shadow:0.6px 0.6px 0.6px #98a6b8"></div>
<div style="position:absolute;left:280.7px;top:442.2px;width:2px;height:2px;border-radius:1px;background:#fcfcfc;box-shadow:0.6px 0.6px 0.6px #98a6b8"></div>
<div style="position:absolute;left:287.1px;top:442.2px;width:2px;height:2px;border-radius:1px;background:#fcfcfc;box-shadow:0.6px 0.6px 0.6px #98a6b8"></div>
<div style="position:absolute;left:293.4px;top:442.2px;width:2px;height:2px;border-radius:1px;background:#fcfcfc;box-shadow:0.6px 0.6px 0.6px #98a6b8"></div>
<div style="position:absolute;left:299.8px;top:442.2px;width:2px;height:2px;border-radius:1px;background:#fcfcfc;box-shadow:0.6px 0.6px 0.6px #98a6b8"></div>
<div style="position:absolute;left:306.2px;top:442.2px;width:2px;height:2px;border-radius:1px;background:#fcfcfc;box-shadow:0.6px 0.6px 0.6px #98a6b8"></div>
<div style="position:absolute;left:312.5px;top:442.2px;width:2px;height:2px;border-radius:1px;background:#fcfcfc;box-shadow:0.6px 0.6px 0.6px #98a6b8"></div>
<div style="position:absolute;left:318.9px;top:442.2px;width:2px;height:2px;border-radius:1px;background:#fcfcfc;box-shadow:0.6px 0.6px 0.6px #98a6b8"></div>
<div style="position:absolute;left:232.9px;top:446.7px;width:2px;height:2px;border-radius:1px;background:#fcfcfc;box-shadow:0.6px 0.6px 0.6px #98a6b8"></div>
<div style="position:absolute;left:239.3px;top:446.7px;width:2px;height:2px;border-radius:1px;background:#fcfcfc;box-shadow:0.6px 0.6px 0.6px #98a6b8"></div>
<div style="position:absolute;left:245.6px;top:446.7px;width:2px;height:2px;border-radius:1px;background:#fcfcfc;box-shadow:0.6px 0.6px 0.6px #98a6b8"></div>
<div style="position:absolute;left:252.0px;top:446.7px;width:2px;height:2px;border-radius:1px;background:#fcfcfc;box-shadow:0.6px 0.6px 0.6px #98a6b8"></div>
<div style="position:absolute;left:258.3px;top:446.7px;width:2px;height:2px;border-radius:1px;background:#fcfcfc;box-shadow:0.6px 0.6px 0.6px #98a6b8"></div>
<div style="position:absolute;left:264.7px;top:446.7px;width:2px;height:2px;border-radius:1px;background:#fcfcfc;box-shadow:0.6px 0.6px 0.6px #98a6b8"></div>
<div style="position:absolute;left:271.1px;top:446.7px;width:2px;height:2px;border-radius:1px;background:#fcfcfc;box-shadow:0.6px 0.6px 0.6px #98a6b8"></div>
<div style="position:absolute;left:277.4px;top:446.7px;width:2px;height:2px;border-radius:1px;background:#fcfcfc;box-shadow:0.6px 0.6px 0.6px #98a6b8"></div>
<div style="position:absolute;left:283.8px;top:446.7px;width:2px;height:2px;border-radius:1px;background:#fcfcfc;box-shadow:0.6px 0.6px 0.6px #98a6b8"></div>
<div style="position:absolute;left:290.1px;top:446.7px;width:2px;height:2px;border-radius:1px;background:#fcfcfc;box-shadow:0.6px 0.6px 0.6px #98a6b8"></div>
<div style="position:absolute;left:296.5px;top:446.7px;width:2px;height:2px;border-radius:1px;background:#fcfcfc;box-shadow:0.6px 0.6px 0.6px #98a6b8"></div>
<div style="position:absolute;left:302.9px;top:446.7px;width:2px;height:2px;border-radius:1px;background:#fcfcfc;box-shadow:0.6px 0.6px 0.6px #98a6b8"></div>
<div style="position:absolute;left:309.2px;top:446.7px;width:2px;height:2px;border-radius:1px;background:#fcfcfc;box-shadow:0.6px 0.6px 0.6px #98a6b8"></div>
<div style="position:absolute;left:315.6px;top:446.7px;width:2px;height:2px;border-radius:1px;background:#fcfcfc;box-shadow:0.6px 0.6px 0.6px #98a6b8"></div>
<div style="position:absolute;left:321.9px;top:446.7px;width:2px;height:2px;border-radius:1px;background:#fcfcfc;box-shadow:0.6px 0.6px 0.6px #98a6b8"></div>
<div class="btn" style="left:643px;top:435px;width:34px"></div>
<div class="btn" style="left:679px;top:435px;width:34px"></div>
<div class="t" style="left:647.65px;top:437.20px;font-size:10px;color:#000;transform:scale(0.8462,0.9);">Pečeť</div>
<div class="t" style="left:682.17px;top:437.20px;font-size:10px;color:#000;transform:scale(0.8276,0.9);">Podpis</div>
</body></html>
